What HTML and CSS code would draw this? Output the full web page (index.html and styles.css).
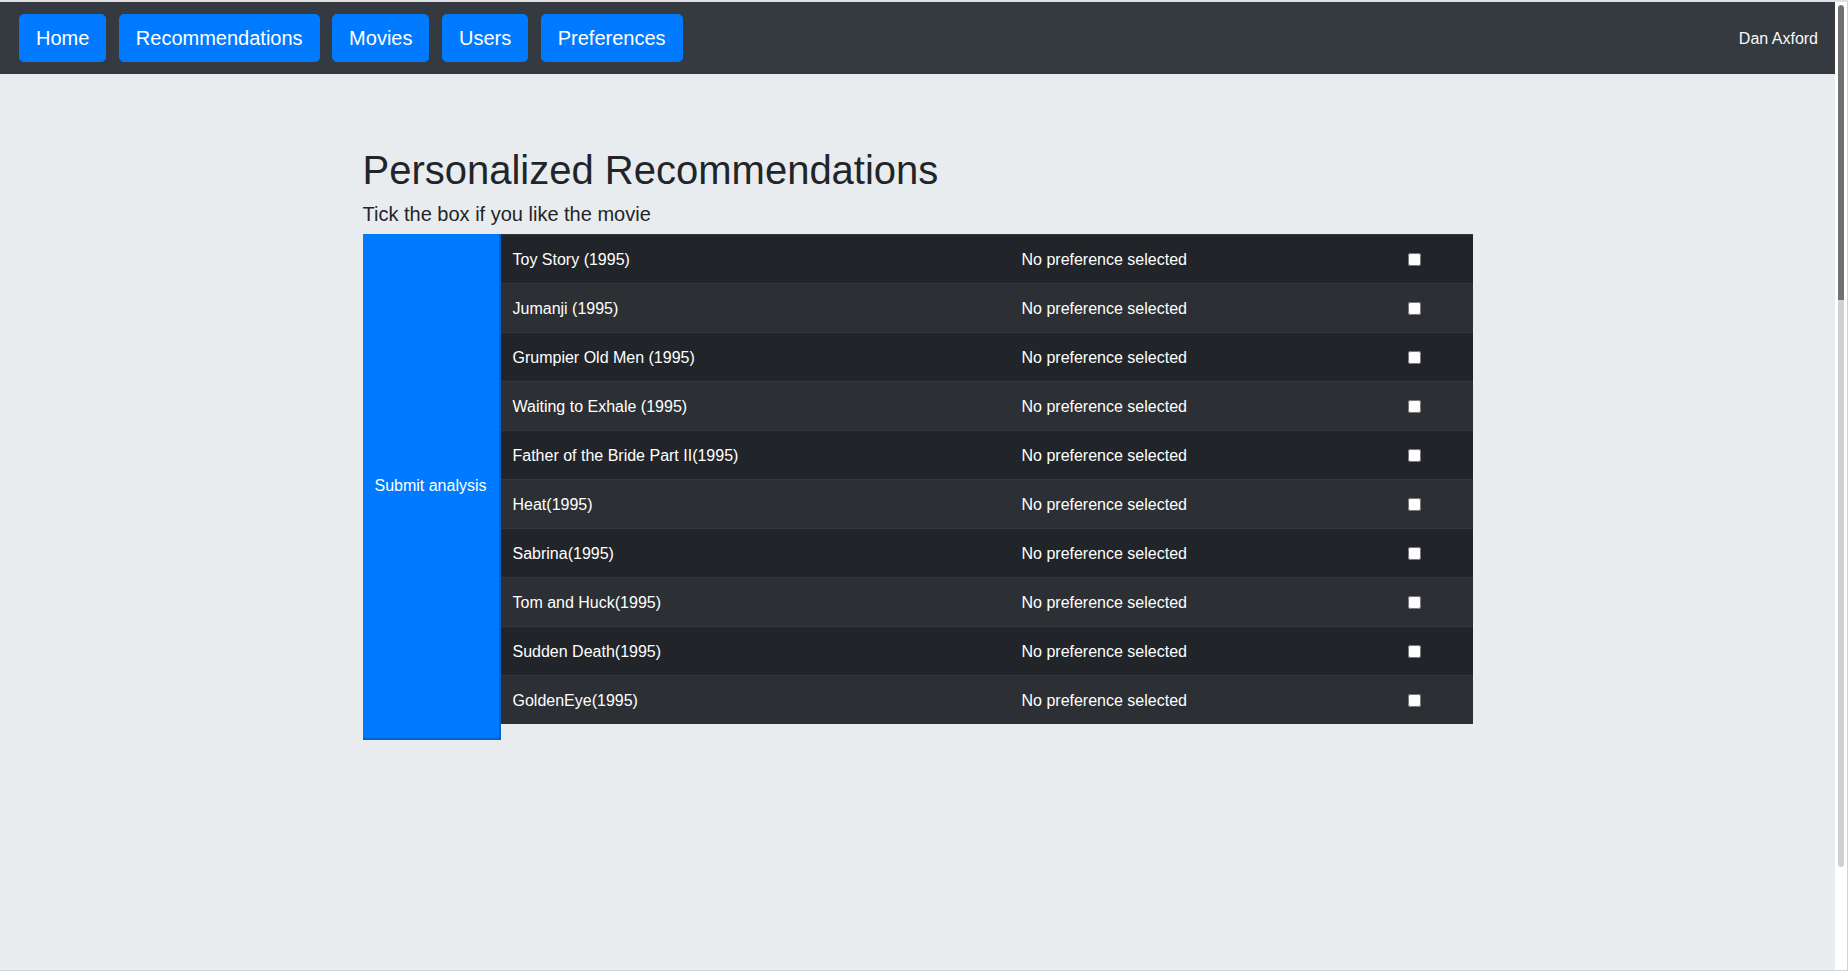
FILE: index.html
```html
<!DOCTYPE html>
<html lang="en">
<head>
<meta charset="utf-8">
<title>Personalized Recommendations</title>
<link rel="stylesheet" href="styles.css">
</head>
<body>
<div class="window">
  <div class="app">
    <nav class="navbar">
      <div class="nav-links">
        <a class="nav-btn" href="#">Home</a>
        <a class="nav-btn" href="#">Recommendations</a>
        <a class="nav-btn" href="#">Movies</a>
        <a class="nav-btn" href="#">Users</a>
        <a class="nav-btn" href="#">Preferences</a>
      </div>
      <span class="user-name">Dan Axford</span>
    </nav>
    <main class="container">
      <h1 class="page-title">Personalized Recommendations</h1>
      <h5 class="page-sub">Tick the box if you like the movie</h5>
      <div class="rec-layout">
        <button class="submit-btn" type="button">Submit analysis</button>
        <table class="movie-table">
          <colgroup>
            <col class="col-title">
            <col class="col-pref">
            <col class="col-check">
          </colgroup>
          <tbody>
            <tr><td>Toy Story (1995)</td><td>No preference selected</td><td><input type="checkbox" class="like-box"></td></tr>
            <tr><td>Jumanji (1995)</td><td>No preference selected</td><td><input type="checkbox" class="like-box"></td></tr>
            <tr><td>Grumpier Old Men (1995)</td><td>No preference selected</td><td><input type="checkbox" class="like-box"></td></tr>
            <tr><td>Waiting to Exhale (1995)</td><td>No preference selected</td><td><input type="checkbox" class="like-box"></td></tr>
            <tr><td>Father of the Bride Part II(1995)</td><td>No preference selected</td><td><input type="checkbox" class="like-box"></td></tr>
            <tr><td>Heat(1995)</td><td>No preference selected</td><td><input type="checkbox" class="like-box"></td></tr>
            <tr><td>Sabrina(1995)</td><td>No preference selected</td><td><input type="checkbox" class="like-box"></td></tr>
            <tr><td>Tom and Huck(1995)</td><td>No preference selected</td><td><input type="checkbox" class="like-box"></td></tr>
            <tr><td>Sudden Death(1995)</td><td>No preference selected</td><td><input type="checkbox" class="like-box"></td></tr>
            <tr><td>GoldenEye(1995)</td><td>No preference selected</td><td><input type="checkbox" class="like-box"></td></tr>
          </tbody>
        </table>
      </div>
    </main>
  </div>
  <div class="scrollbar">
    <div class="track"><div class="thumb"></div></div>
  </div>
</div>
</body>
</html>
```

FILE: styles.css
```css
* {
  box-sizing: border-box;
}

html, body {
  margin: 0;
  padding: 0;
  height: 971px;
  overflow: hidden;
}

body {
  font-family: "Liberation Sans", Arial, sans-serif;
  font-size: 16px;
  line-height: 1.5;
  color: #212529;
  background: #ffffff;
}

.window {
  display: flex;
  height: 971px;
  border-top: 2px solid #e0e0e0;
  border-bottom: 1px solid #d6d6d6;
}

.app {
  flex: 1;
  min-width: 0;
  background: #e9ecef;
  display: flex;
  flex-direction: column;
}

.navbar {
  background: #343a40;
  height: 72px;
  padding: 12px 17px 12px 19px;
  display: flex;
  align-items: center;
  justify-content: space-between;
}

.nav-links {
  display: flex;
  gap: 12.5px;
}

.nav-btn {
  display: inline-block;
  font-size: 20px;
  line-height: 30px;
  padding: 8px 16px;
  color: #ffffff;
  background: #007bff;
  border: 1px solid #007bff;
  border-radius: 4.8px;
  text-decoration: none;
}

.user-name {
  color: #f8f9fa;
  font-size: 16px;
  line-height: 24px;
  padding-top: 1px;
}

.container {
  width: 1110px;
  margin: 0 auto;
  padding-top: 72px;
}

.page-title {
  margin: 0 0 8px;
  font-size: 40px;
  line-height: 48px;
  font-weight: 400;
  color: #212529;
}

.page-sub {
  margin: 0 0 8px;
  font-size: 20px;
  line-height: 24px;
  font-weight: 400;
  color: #212529;
}

.rec-layout {
  display: flex;
  align-items: flex-start;
}

.submit-btn {
  width: 138px;
  height: 506px;
  flex: none;
  padding: 0;
  margin: 0;
  background: #007bff;
  color: #ffffff;
  font-family: "Liberation Sans", Arial, sans-serif;
  font-size: 16px;
  line-height: 24px;
  border: none;
  border-right: 2px solid #0062cc;
  border-bottom: 2px solid #0062cc;
  border-radius: 0;
  text-align: center;
}

.movie-table {
  width: 972px;
  table-layout: fixed;
  border-collapse: collapse;
  background: #212529;
  color: #ffffff;
}

.col-title { width: 509px; }
.col-pref { width: 382px; }
.col-check { width: 81px; }

.movie-table td {
  padding: 13px 12px 11px;
  border-top: 1px solid #32383e;
  line-height: 24px;
  vertical-align: top;
  white-space: nowrap;
}

.movie-table tr:nth-child(even) {
  background: #2c3034;
}

.like-box {
  width: 13px;
  height: 13px;
  margin: 2px 3px 4px 4px;
  vertical-align: middle;
}

.scrollbar {
  width: 13px;
  flex: none;
  background: #ffffff;
  padding: 3px 3px 0 3px;
  border-right: 1px solid #d4d4d4;
}

.track {
  width: 6px;
  height: 862px;
  background: #d0d0d0;
  border-radius: 3px;
  overflow: hidden;
}

.thumb {
  height: 295px;
  background: #717171;
  border-radius: 3px 3px 0 0;
}
```
